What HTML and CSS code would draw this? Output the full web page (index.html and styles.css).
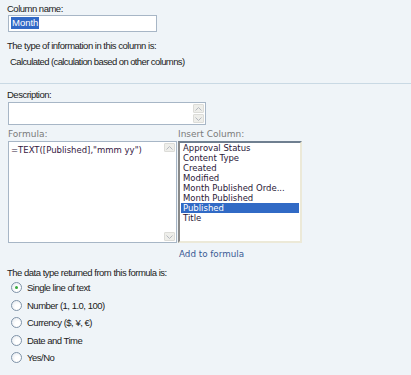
FILE: index.html
```html
<!DOCTYPE html>
<html>
<head>
<meta charset="utf-8">
<link rel="stylesheet" href="styles.css">
</head>
<body>
<div class="page">
  <section class="sec-top">
    <div class="lbl">Column name:</div>
    <div class="input"><span class="sel">Month</span></div>
    <div class="lbl type-lbl">The type of information in this column is:</div>
    <div class="val">Calculated (calculation based on other columns)</div>
  </section>
  <section class="sec-bottom">
    <div class="lbl desc-lbl">Description:</div>
    <div class="desc">
      <div class="desc-text"></div>
      <div class="vscroll">
        <div class="sbtn"><svg width="7" height="4" viewBox="0 0 7 4"><path d="M0.5 3.5 L3.5 0.5 L6.5 3.5" fill="none" stroke="#b4b8c0" stroke-width="1"/></svg></div>
        <div class="sbtn"><svg width="7" height="4" viewBox="0 0 7 4"><path d="M0.5 0.5 L3.5 3.5 L6.5 0.5" fill="none" stroke="#b4b8c0" stroke-width="1"/></svg></div>
      </div>
    </div>
    <div class="cols">
      <div class="col-formula">
        <div class="glabel">Formula:</div>
        <div class="formula">
          <div class="formula-text">=TEXT([Published],"mmm yy")</div>
          <div class="vscroll tall">
            <div class="sbtn"><svg width="7" height="4" viewBox="0 0 7 4"><path d="M0.5 3.5 L3.5 0.5 L6.5 3.5" fill="none" stroke="#b4b8c0" stroke-width="1"/></svg></div>
            <div class="strack"></div>
            <div class="sbtn"><svg width="7" height="4" viewBox="0 0 7 4"><path d="M0.5 0.5 L3.5 3.5 L6.5 0.5" fill="none" stroke="#b4b8c0" stroke-width="1"/></svg></div>
          </div>
        </div>
      </div>
      <div class="col-insert">
        <div class="glabel">Insert Column:</div>
        <ul class="list">
          <li>Approval Status</li>
          <li>Content Type</li>
          <li>Created</li>
          <li>Modified</li>
          <li>Month Published Orde...</li>
          <li>Month Published</li>
          <li class="on">Published</li>
          <li>Title</li>
        </ul>
        <a class="add">Add to formula</a>
      </div>
    </div>
    <div class="lbl ret-lbl">The data type returned from this formula is:</div>
    <ul class="radios">
      <li><span class="radio checked"></span>Single line of text</li>
      <li><span class="radio"></span>Number (1, 1.0, 100)</li>
      <li><span class="radio"></span>Currency ($, ¥, €)</li>
      <li><span class="radio"></span>Date and Time</li>
      <li><span class="radio"></span>Yes/No</li>
    </ul>
  </section>
</div>
</body>
</html>
```

FILE: styles.css
```css
* { box-sizing: border-box; }
html, body { margin: 0; padding: 0; }
body {
  background: #eff4f8;
  width: 411px;
  height: 375px;
  overflow: hidden;
  font-family: "Liberation Sans", Arial, sans-serif;
  font-size: 9.5px;
  letter-spacing: -0.5px;
  color: #222;
}
.sec-top {
  padding: 3px 0 0 7px;
  height: 84px;
  border-bottom: 1px solid #c9d9e4;
}
.lbl { line-height: 12px; height: 12px; }
.input {
  margin: 0 0 0 1px;
  width: 149px;
  height: 17px;
  border: 1px solid #a7b6c6;
  background: #fff;
  padding: 1px 0 0 2px;
}
.sel {
  display: inline-block;
  background: #3169c6;
  color: #fff;
  line-height: 12px;
  padding: 0 1px;
  letter-spacing: 0;
}
.type-lbl { margin-top: 8px; }
.val { margin: 4px 0 0 3px; line-height: 12px; letter-spacing: -0.6px; }

.sec-bottom { padding: 5px 0 0 7px; }
.desc {
  margin: 1px 0 0 1px;
  width: 198px;
  height: 23px;
  border: 1px solid #a7b6c6;
  background: #fff;
  display: flex;
  justify-content: flex-end;
  padding: 1px;
}
.vscroll {
  width: 11px;
  display: flex;
  flex-direction: column;
  gap: 1px;
}
.sbtn {
  height: 9px;
  background: #eeeeea;
  border: 1px solid #dcdcd8;
  border-radius: 1px;
  display: flex;
  align-items: center;
  justify-content: center;
}
.cols {
  display: flex;
  margin-top: 3px;
  margin-left: 1px;
}
.glabel {
  font-family: "DejaVu Sans", Verdana, sans-serif;
  font-size: 9px;
  letter-spacing: 0;
  color: #7a7a7a;
  line-height: 12px;
  height: 13px;
}
.col-formula { width: 170px; }
.formula {
  width: 169px;
  height: 102px;
  border: 1px solid #a7b6c6;
  background: #fff;
  display: flex;
  padding: 1px;
}
.formula-text {
  flex: 1;
  font-family: "DejaVu Sans", Verdana, sans-serif;
  font-size: 8.5px;
  letter-spacing: 0;
  color: #35183f;
  padding: 2px 0 0 1px;
  line-height: 11px;
}
.vscroll.tall { gap: 0; }
.strack { flex: 1; }
.col-insert { width: 124px; }
.list {
  list-style: none;
  margin: 0;
  width: 124px;
  height: 102px;
  background: #fff;
  border-top: 2px solid #6f7f90;
  border-left: 2px solid #8a8a8a;
  border-right: 2px solid #ece9d8;
  border-bottom: 2px solid #ece9d8;
  padding: 0 1px;
  font-family: "DejaVu Sans", Verdana, sans-serif;
  font-size: 8.5px;
  letter-spacing: 0;
  color: #2a1838;
}
.list li {
  line-height: 10px;
  height: 10px;
  padding-left: 2px;
  white-space: nowrap;
}
.list li.on { background: #316ac5; color: #fff; }
.add {
  display: block;
  margin: 5px 0 0 1px;
  font-family: "DejaVu Sans", Verdana, sans-serif;
  font-size: 8.75px;
  letter-spacing: 0;
  color: #3a5a94;
  line-height: 12px;
}
.ret-lbl { margin-top: 7px; }
.radios {
  list-style: none;
  margin: 0;
  padding: 0 0 0 4px;
}
.radios li {
  display: flex;
  align-items: center;
  height: 17.5px;
  gap: 5px;
}
.radio {
  width: 11px;
  height: 11px;
  border-radius: 50%;
  border: 1px solid #7f93a8;
  background: radial-gradient(circle at 65% 65%, #ffffff 30%, #dfe5ec 100%);
  display: flex;
  align-items: center;
  justify-content: center;
}
.radio.checked::after {
  content: "";
  width: 3px;
  height: 3px;
  border-radius: 50%;
  background: #34a83b;
}
```
